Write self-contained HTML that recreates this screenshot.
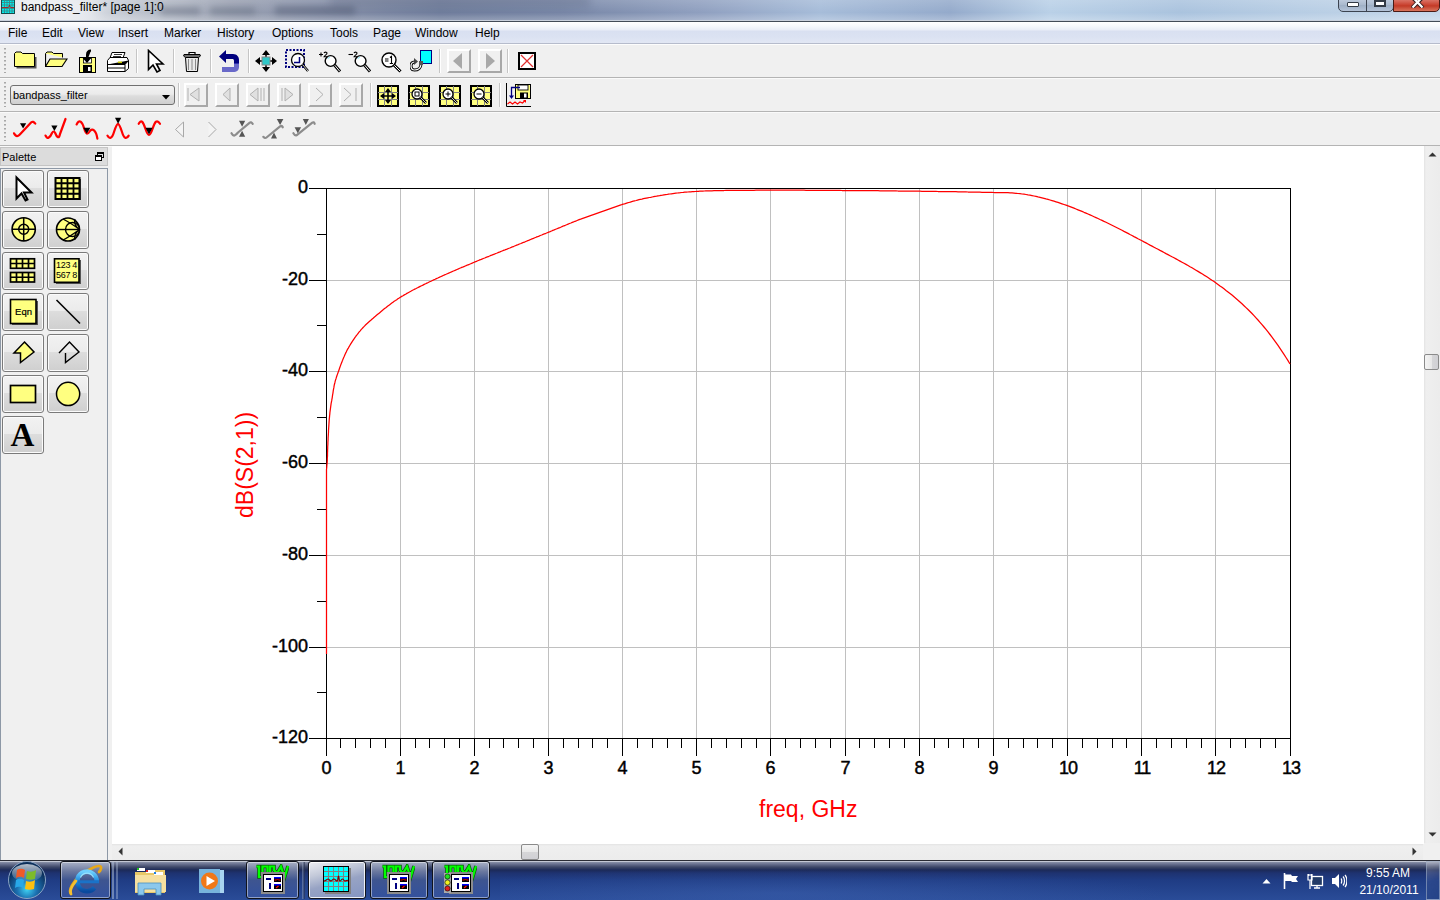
<!DOCTYPE html><html><head><meta charset="utf-8"><title>bandpass_filter</title><style>

*{margin:0;padding:0;box-sizing:border-box}
html,body{width:1440px;height:900px;overflow:hidden;background:#f0f0f0;font-family:"Liberation Sans",sans-serif}
.a{position:absolute}
.menu{position:absolute;top:26px;font-size:12px;color:#000;line-height:14px}
.sep{position:absolute;width:1px;background:#c8c8c8;border-right:1px solid #fff}
.grip{position:absolute;left:4px;width:2px;background:repeating-linear-gradient(to bottom,#a8a8a8 0,#a8a8a8 1px,#c8c8c8 1px,#c8c8c8 2px,transparent 2px,transparent 4px)}
.pb{position:absolute;width:42px;height:38px;border:1px solid #7a7a7a;border-radius:3px;box-shadow:inset 0 0 0 1px #fbfbfb;background:linear-gradient(to bottom,#f2f2f2 0%,#ebebeb 47%,#dddddd 48%,#cfcfcf 100%)}
.tbtn{position:absolute;top:861px;height:38px;border:1px solid rgba(255,255,255,0.35);border-radius:3px;background:linear-gradient(to bottom,rgba(255,255,255,0.28),rgba(255,255,255,0.08) 50%,rgba(255,255,255,0.05));box-shadow:inset 0 0 0 1px rgba(0,0,0,0.25)}

</style></head><body>
<div class="a" style="left:0;top:0;width:1440px;height:21px;background:linear-gradient(to right,#dfe3ea 0px,#d3d8e0 90px,#b9bfca 150px,#9aa1b2 230px,#8690a8 320px,#6f7d9c 440px,#7786a6 560px,#8f9fbf 700px,#a6bcd9 820px,#94aacb 950px,#b9d0e7 1050px,#aac3de 1180px,#b7cde4 1300px,#c4d7ea 1440px)"></div>
<div class="a" style="left:0;top:0;width:1440px;height:21px;background:linear-gradient(to bottom,rgba(255,255,255,0.15),rgba(255,255,255,0) 60%,rgba(255,255,255,0.25))"></div>
<div class="a" style="left:0;top:0;width:1440px;height:21px;overflow:hidden"><div class="a" style="left:10px;top:-6px;width:90px;height:30px;border-radius:50%;background:rgba(255,255,255,0.55);filter:blur(8px)"></div><div class="a" style="left:160px;top:7px;width:40px;height:8px;background:rgba(70,78,100,0.35);filter:blur(3px)"></div><div class="a" style="left:210px;top:7px;width:45px;height:8px;background:rgba(70,78,100,0.3);filter:blur(3px)"></div><div class="a" style="left:275px;top:6px;width:80px;height:9px;background:rgba(60,68,95,0.35);filter:blur(3px)"></div><div class="a" style="left:330px;top:-4px;width:260px;height:10px;background:rgba(50,60,90,0.22);filter:blur(5px)"></div></div>
<div class="a" style="left:0;top:20px;width:1440px;height:1px;background:#c9d0dc"></div>
<div class="a" style="left:0;top:21px;width:1440px;height:1px;background:#434b57"></div>
<svg class="a" style="left:1px;top:0" width="14" height="14" viewBox="0 0 14 14"><rect x="0.5" y="0" width="13" height="13.5" fill="#00f0f0" stroke="#1a4a4a" stroke-width="1"/><path d="M3.5 0V13M6 0V13M8.5 0V13M11 0V13M1 2.5H13M1 5H13M1 8.5H13M1 11H13" stroke="#3a8a8a" stroke-width="0.9"/><path d="M1 7.5H7.5L8.5 5L9.5 7.5H13" stroke="#a02828" stroke-width="1" fill="none"/></svg>
<div class="a" style="left:21px;top:0px;font-size:12px;line-height:14px;color:#000;white-space:nowrap">bandpass_filter* [page 1]:0</div>
<div class="a" style="left:1338px;top:-3px;width:56px;height:15px;border:1px solid #3b4350;border-radius:0 0 5px 5px;background:linear-gradient(to bottom,#c4d0e0,#a9b8cd 55%,#9fb0c6 56%,#b4c3d8)"></div>
<div class="a" style="left:1366px;top:0;width:1px;height:11px;background:#3b4350"></div>
<div class="a" style="left:1393px;top:-3px;width:47px;height:15px;border:1px solid #4a1a14;border-radius:0 0 5px 0;background:linear-gradient(to bottom,#e0867a,#c9402e 55%,#c23a26 60%,#d9745c)"></div>
<div class="a" style="left:1347px;top:2px;width:12px;height:5px;background:#fff;border:1px solid #333a45;border-radius:1px"></div>
<div class="a" style="left:1374px;top:-2px;width:12px;height:9px;border:2px solid #333a45;background:#fff"></div>
<div class="a" style="left:1376px;top:-2px;width:8px;height:4px;background:#333a45"></div>
<svg class="a" style="left:1411px;top:0" width="14" height="8" viewBox="0 0 14 8"><path d="M1 -3L12 8M12 -3L1 8" stroke="#3a2020" stroke-width="4"/><path d="M1.5 -3L11.5 7.5M11.5 -3L1.5 7.5" stroke="#fff" stroke-width="2.2"/></svg>
<div class="a" style="left:0;top:22px;width:1440px;height:21px;background:linear-gradient(to bottom,#ffffff 0px,#f6f8fc 4px,#e9edf7 8px,#d9e0f1 9px,#dbe2f2 15px,#e2e7f4 21px)"></div>
<div class="a" style="left:0;top:43px;width:1440px;height:1px;background:#b6bccc"></div>
<div class="a" style="left:0;top:44px;width:1440px;height:1px;background:#fdfdfd"></div>
<div class="menu" style="left:8px">File</div>
<div class="menu" style="left:42px">Edit</div>
<div class="menu" style="left:78px">View</div>
<div class="menu" style="left:118px">Insert</div>
<div class="menu" style="left:164px">Marker</div>
<div class="menu" style="left:217px">History</div>
<div class="menu" style="left:272px">Options</div>
<div class="menu" style="left:330px">Tools</div>
<div class="menu" style="left:373px">Page</div>
<div class="menu" style="left:415px">Window</div>
<div class="menu" style="left:475px">Help</div>
<div class="a" style="left:0;top:77px;width:1440px;height:1px;background:#b4b4b4"></div>
<div class="a" style="left:0;top:78px;width:1440px;height:1px;background:#fafafa"></div>
<div class="a" style="left:0;top:111px;width:1440px;height:1px;background:#b4b4b4"></div>
<div class="a" style="left:0;top:112px;width:1440px;height:1px;background:#fafafa"></div>
<div class="a" style="left:0;top:145px;width:1440px;height:1px;background:#b4b4b4"></div>
<div class="a" style="left:0;top:146px;width:1440px;height:1px;background:#fafafa"></div>
<div class="grip" style="top:48px;height:25px"></div>
<div class="grip" style="top:82px;height:25px"></div>
<div class="grip" style="top:116px;height:25px"></div>
<svg class="a" style="left:14px;top:51px" width="23" height="18" viewBox="0 0 23 18"><path d="M1.5 3.5H8.5L10 5H21.5V16.5H1.5Z" fill="#555" transform="translate(1,1)"/><path d="M0.5 2.5L2 1H7L8.5 2.5H20.5V15.5H0.5Z" fill="#ffff80" stroke="#000"/></svg>
<svg class="a" style="left:45px;top:51px" width="23" height="18" viewBox="0 0 23 18"><path d="M0.5 2.5L2 1H7L8.5 2.5H17.5V6.5" fill="#ffff80" stroke="#000"/><path d="M0.5 2.5V15.5H17L22 8H5L0.5 15.5" fill="#ffff80" stroke="#000" stroke-width="1.2"/></svg>
<svg class="a" style="left:79px;top:49px" width="17" height="24" viewBox="0 0 17 24"><rect x="0.5" y="8.5" width="16" height="15" fill="#ffff80" stroke="#000"/><rect x="4" y="16" width="9" height="7" fill="#000"/><rect x="9" y="18" width="2.5" height="4" fill="#fff"/><rect x="4.5" y="9" width="8" height="5" fill="#fff" stroke="#000" stroke-width="0.8"/><path d="M12 1.5C9 1.5 8 3 8 6V12M5 9L8 12.5L11 9Z" stroke="#000" stroke-width="2" fill="#000"/></svg>
<svg class="a" style="left:106px;top:51px" width="24" height="21" viewBox="0 0 24 21"><path d="M6 1.5H19L17 7H4Z" fill="#fff" stroke="#000"/><path d="M8 3.5H16M7 5.5H15" stroke="#000" stroke-width="0.8"/><path d="M1.5 9.5L4 6.5H21L22.5 9.5V17.5L19 20.5H1.5Z" fill="#fff" stroke="#000"/><path d="M1.5 13.5H19L22.5 9.5M19 13.5V20.5M1.5 17H19" stroke="#000"/><rect x="12" y="10.5" width="4" height="1.6" fill="#c8c800"/></svg>
<div class="a" style="left:136px;top:49px;width:1px;height:24px;background:#c5c5c5"></div><div class="a" style="left:137px;top:49px;width:1px;height:24px;background:#fff"></div>
<svg class="a" style="left:147px;top:49px" width="18" height="24" viewBox="0 0 18 24"><path d="M1.5 1.5V20.5L6 16L10 23L13 21.5L9.5 15H16Z" fill="#fff" stroke="#000" stroke-width="1.6"/></svg>
<div class="a" style="left:173px;top:49px;width:1px;height:24px;background:#c5c5c5"></div><div class="a" style="left:174px;top:49px;width:1px;height:24px;background:#fff"></div>
<svg class="a" style="left:182px;top:50px" width="20" height="23" viewBox="0 0 20 23"><path d="M2 4.5H18M7 4.5V2.5H13V4.5" stroke="#000" fill="none" stroke-width="1.2"/><path d="M1.5 5H18.5L17.5 7H2.5Z" fill="#ddd" stroke="#000"/><path d="M3.5 7.5H16.5L15.5 21.5H4.5Z" fill="#e8e8e8" stroke="#000"/><path d="M6.5 9V20M10 9V20M13.5 9V20" stroke="#888"/></svg>
<div class="a" style="left:210px;top:49px;width:1px;height:24px;background:#c5c5c5"></div><div class="a" style="left:211px;top:49px;width:1px;height:24px;background:#fff"></div>
<svg class="a" style="left:219px;top:50px" width="22" height="23" viewBox="0 0 22 23"><path d="M0 6.5L7 0V4H14C18 4 20 7 20 10V14H15V11C15 9.5 14.5 9 13 9H7V13Z" fill="#00007e"/><path d="M20 13V17C20 20 18 22 14 22H3V17H15V13Z" fill="#3c3cbc" opacity="0.75"/></svg>
<div class="a" style="left:248px;top:49px;width:1px;height:24px;background:#c5c5c5"></div><div class="a" style="left:249px;top:49px;width:1px;height:24px;background:#fff"></div>
<svg class="a" style="left:255px;top:50px" width="22" height="22" viewBox="0 0 22 22"><path d="M11 0L15 5H7ZM11 22L15 17H7ZM0 11L5 7V15ZM22 11L17 7V15Z" fill="#000"/><path d="M11 4V18M4 11H18" stroke="#000" stroke-width="1.5"/><rect x="7" y="7" width="8" height="8" fill="#30c8c8" stroke="#888"/></svg>
<svg class="a" style="left:285px;top:49px" width="25" height="24" viewBox="0 0 25 24"><rect x="1" y="1" width="18" height="17" fill="none" stroke="#00007e" stroke-width="2" stroke-dasharray="2 1.5"/><circle cx="13" cy="11" r="6.5" fill="#fff" stroke="#000" stroke-width="1.3"/><path d="M9 13.5H14.5V8" stroke="#00007e" stroke-width="1.5" fill="none"/><path d="M17.5 15.5L23 22" stroke="#000" stroke-width="2.4"/><path d="M17.5 15.5L23 22" stroke="#fff" stroke-width="0.8"/></svg>
<svg class="a" style="left:318px;top:51px" width="24" height="22" viewBox="0 0 24 22"><circle cx="12.6" cy="10" r="5.4" fill="#fff" stroke="#000" stroke-width="1.4"/><path d="M10 7.5A3 3 0 0 1 11.5 6.3" stroke="#30d0f0" stroke-width="1" fill="none"/><path d="M16.5 14L22 20.5" stroke="#000" stroke-width="3"/><path d="M16.8 14.3L21.7 20.2" stroke="#fff" stroke-width="1"/><path d="M1 3.5H5M3 1.5V5.5" stroke="#000" stroke-width="1.1"/><path d="M6 2.2C6.3 0.8 9 0.6 9 2.3C9 3.5 6.3 4.5 6 5.8H9.4" stroke="#000" stroke-width="1.1" fill="none"/></svg>
<svg class="a" style="left:348px;top:51px" width="24" height="22" viewBox="0 0 24 22"><circle cx="12.6" cy="10" r="5.4" fill="#fff" stroke="#000" stroke-width="1.4"/><path d="M10 7.5A3 3 0 0 1 11.5 6.3" stroke="#30d0f0" stroke-width="1" fill="none"/><path d="M16.5 14L22 20.5" stroke="#000" stroke-width="3"/><path d="M16.8 14.3L21.7 20.2" stroke="#fff" stroke-width="1"/><path d="M0.5 3.5H5" stroke="#000" stroke-width="1.1"/><path d="M6 2.2C6.3 0.8 9 0.6 9 2.3C9 3.5 6.3 4.5 6 5.8H9.4" stroke="#000" stroke-width="1.1" fill="none"/></svg>
<svg class="a" style="left:381px;top:51px" width="22" height="22" viewBox="0 0 22 22"><circle cx="8" cy="9" r="7" fill="#fff" stroke="#000" stroke-width="1.4"/><path d="M4 8H7.5M4 10H7.5M9 6.5L10.5 5.3V12.5M8.8 12.5H12" stroke="#000" stroke-width="1.1" fill="none"/><path d="M13 14L19.5 20.5" stroke="#000" stroke-width="3"/><path d="M13.3 14.3L19.2 20.2" stroke="#fff" stroke-width="1"/></svg>
<svg class="a" style="left:410px;top:50px" width="23" height="22" viewBox="0 0 23 22"><rect x="10.5" y="0.5" width="11" height="13" fill="#00ffff" stroke="#000080"/><path d="M11 14C11 18 8 20 4.5 20C2 20 1 18 1 16C1 13 3 12 5 12" fill="none" stroke="#000" stroke-width="3"/><path d="M11 14C11 18 8 20 4.5 20C2 20 1 18 1 16C1 13 3 12 5 12" fill="none" stroke="#fff" stroke-width="1.2"/><path d="M4 8L8 11.5L4 15Z" fill="#444"/><rect x="9" y="11" width="4" height="4" fill="#555"/></svg>
<div class="a" style="left:439px;top:49px;width:1px;height:24px;background:#c5c5c5"></div><div class="a" style="left:440px;top:49px;width:1px;height:24px;background:#fff"></div>
<div class="a" style="left:447px;top:49px;width:24px;height:24px;background:#f0f0f0;border-top:2px solid #fff;border-left:2px solid #fff;border-right:2px solid #a8a8a8;border-bottom:2px solid #a8a8a8"></div>
<svg class="a" style="left:452px;top:52px" width="11" height="18" viewBox="0 0 11 18"><path d="M10 1V17L1 9Z" fill="#a8a8a8"/></svg>
<div class="a" style="left:478px;top:49px;width:24px;height:24px;background:#f0f0f0;border-top:2px solid #fff;border-left:2px solid #fff;border-right:2px solid #a8a8a8;border-bottom:2px solid #a8a8a8"></div>
<svg class="a" style="left:485px;top:52px" width="11" height="18" viewBox="0 0 11 18"><path d="M1 1V17L10 9Z" fill="#a8a8a8"/></svg>
<div class="a" style="left:507px;top:49px;width:1px;height:24px;background:#c5c5c5"></div><div class="a" style="left:508px;top:49px;width:1px;height:24px;background:#fff"></div>
<svg class="a" style="left:518px;top:52px" width="18" height="18" viewBox="0 0 18 18"><rect x="1" y="1" width="16" height="16" fill="#fff" stroke="#000" stroke-width="2"/><path d="M3 3L15 15M15 3L3 15" stroke="#e03030" stroke-width="1.2"/></svg>
<div class="a" style="left:10px;top:85px;width:165px;height:20px;border:1px solid #707070;border-radius:3px;background:linear-gradient(to bottom,#f2f2f2,#ebebeb 45%,#dddddd 55%,#cfcfcf)"></div>
<div class="a" style="left:13px;top:88px;font-size:11px;line-height:14px;color:#000;white-space:nowrap">bandpass_filter</div>
<svg class="a" style="left:162px;top:95px" width="8" height="5" viewBox="0 0 8 5"><path d="M0 0H8L4 4.5Z" fill="#000"/></svg>
<div class="a" style="left:178px;top:83px;width:1px;height:24px;background:#c5c5c5"></div><div class="a" style="left:179px;top:83px;width:1px;height:24px;background:#fff"></div>
<div class="a" style="left:184px;top:83px;width:24px;height:24px;background:#f0f0f0;border-top:2px solid #fff;border-left:2px solid #fff;border-right:2px solid #a8a8a8;border-bottom:2px solid #a8a8a8"></div>
<svg class="a" style="left:184px;top:83px" width="24" height="24" viewBox="0 0 24 24"><path d="M4 5V18M15 5V18L6 11.5Z" stroke="#b0b0b0" fill="#e0e0e0" stroke-width="1"/></svg>
<div class="a" style="left:215px;top:83px;width:24px;height:24px;background:#f0f0f0;border-top:2px solid #fff;border-left:2px solid #fff;border-right:2px solid #a8a8a8;border-bottom:2px solid #a8a8a8"></div>
<svg class="a" style="left:215px;top:83px" width="24" height="24" viewBox="0 0 24 24"><path d="M15 5V18L8 11.5Z" stroke="#b0b0b0" fill="#e0e0e0"/></svg>
<div class="a" style="left:246px;top:83px;width:24px;height:24px;background:#f0f0f0;border-top:2px solid #fff;border-left:2px solid #fff;border-right:2px solid #a8a8a8;border-bottom:2px solid #a8a8a8"></div>
<svg class="a" style="left:246px;top:83px" width="24" height="24" viewBox="0 0 24 24"><path d="M12 5V18L4 11.5ZM15 5V18M18 5V18" stroke="#b0b0b0" fill="#e0e0e0"/></svg>
<div class="a" style="left:277px;top:83px;width:24px;height:24px;background:#f0f0f0;border-top:2px solid #fff;border-left:2px solid #fff;border-right:2px solid #a8a8a8;border-bottom:2px solid #a8a8a8"></div>
<svg class="a" style="left:277px;top:83px" width="24" height="24" viewBox="0 0 24 24"><path d="M8 5V18L16 11.5Z M5 5V18" stroke="#b0b0b0" fill="#e0e0e0"/></svg>
<div class="a" style="left:308px;top:83px;width:24px;height:24px;background:#f0f0f0;border-top:2px solid #fff;border-left:2px solid #fff;border-right:2px solid #a8a8a8;border-bottom:2px solid #a8a8a8"></div>
<svg class="a" style="left:308px;top:83px" width="24" height="24" viewBox="0 0 24 24"><path d="M8 5L15 11.5L8 18" stroke="#b0b0b0" fill="none"/></svg>
<div class="a" style="left:339px;top:83px;width:24px;height:24px;background:#f0f0f0;border-top:2px solid #fff;border-left:2px solid #fff;border-right:2px solid #a8a8a8;border-bottom:2px solid #a8a8a8"></div>
<svg class="a" style="left:339px;top:83px" width="24" height="24" viewBox="0 0 24 24"><path d="M5 5L12 11.5L5 18M17 5V18" stroke="#b0b0b0" fill="none"/></svg>
<div class="a" style="left:370px;top:83px;width:1px;height:24px;background:#c5c5c5"></div><div class="a" style="left:371px;top:83px;width:1px;height:24px;background:#fff"></div>
<svg class="a" style="left:377px;top:85px" width="22" height="22" viewBox="0 0 22 22"><rect x="1" y="1" width="20" height="20" fill="#ffff80" stroke="#000" stroke-width="2"/><path d="M7.5 1V21M14.5 1V21M1 7.5H21M1 14.5H21" stroke="#808080" stroke-width="1"/><path d="M11 3L14 7H8ZM11 19L14 15H8ZM3 11L7 8V14ZM19 11L15 8V14Z" fill="#000"/><path d="M11 6V16M6 11H16" stroke="#000" stroke-width="1.6"/></svg>
<svg class="a" style="left:408px;top:85px" width="22" height="22" viewBox="0 0 22 22"><rect x="1" y="1" width="20" height="20" fill="#ffff80" stroke="#000" stroke-width="2"/><path d="M7.5 1V21M14.5 1V21M1 7.5H21M1 14.5H21" stroke="#808080" stroke-width="1"/><circle cx="9" cy="9" r="5" fill="#fff" stroke="#000" stroke-width="1.3"/><rect x="7" y="7" width="4" height="4" fill="none" stroke="#000"/><path d="M12.5 12.5L18 18" stroke="#000" stroke-width="2.5"/><path d="M12.5 12.5L18 18" stroke="#fff" stroke-width="0.8"/></svg>
<svg class="a" style="left:439px;top:85px" width="22" height="22" viewBox="0 0 22 22"><rect x="1" y="1" width="20" height="20" fill="#ffff80" stroke="#000" stroke-width="2"/><path d="M7.5 1V21M14.5 1V21M1 7.5H21M1 14.5H21" stroke="#808080" stroke-width="1"/><circle cx="9" cy="9" r="5" fill="#fff" stroke="#000" stroke-width="1.3"/><path d="M6.5 9H11.5M9 6.5V11.5" stroke="#000"/><path d="M12.5 12.5L18 18" stroke="#000" stroke-width="2.5"/><path d="M12.5 12.5L18 18" stroke="#fff" stroke-width="0.8"/></svg>
<svg class="a" style="left:470px;top:85px" width="22" height="22" viewBox="0 0 22 22"><rect x="1" y="1" width="20" height="20" fill="#ffff80" stroke="#000" stroke-width="2"/><path d="M7.5 1V21M14.5 1V21M1 7.5H21M1 14.5H21" stroke="#808080" stroke-width="1"/><circle cx="9" cy="9" r="5" fill="#fff" stroke="#000" stroke-width="1.3"/><path d="M6.5 9H11.5" stroke="#000"/><path d="M12.5 12.5L18 18" stroke="#000" stroke-width="2.5"/><path d="M12.5 12.5L18 18" stroke="#fff" stroke-width="0.8"/></svg>
<div class="a" style="left:499px;top:83px;width:1px;height:24px;background:#c5c5c5"></div><div class="a" style="left:500px;top:83px;width:1px;height:24px;background:#fff"></div>
<svg class="a" style="left:506px;top:83px" width="26" height="25" viewBox="0 0 26 25"><path d="M0.5 0V23.5H25" stroke="#000" fill="none"/><rect x="9.5" y="1.5" width="15" height="14" fill="#ffff80" stroke="#000"/><rect x="14" y="9.5" width="8" height="6" fill="#000"/><rect x="18" y="10.5" width="2.5" height="4" fill="#fff"/><rect x="12" y="2" width="10" height="5" fill="#fff" stroke="#000" stroke-width="0.9"/><path d="M14 4.5H5.5V13" stroke="#000080" fill="none" stroke-width="1.3"/><path d="M3 12.5L5.5 16L8 12.5Z" fill="#000080"/><path d="M1.5 21L4 19L6.5 21L9 19L11.5 21L14 19L16.5 20L19 17.5" stroke="#f00" fill="none" stroke-width="1.1"/><path d="M17 17H20V20Z" fill="#f00"/></svg>
<svg class="a" style="left:0;top:0" width="330" height="146" viewBox="0 0 330 146"><path d="M14 133.3Q15.5 136.5 17.7 136Q19 135.5 21 133.2L31.3 122.3Q33 120.8 35.3 123.6" stroke="#ff0000" stroke-width="2.2" fill="none" stroke-linecap="round" stroke-linejoin="round"/><path d="M20 123.2H26.2L23.1 128.6Z" fill="#000"/><path d="M45.5 135.6Q47 138.6 48.5 137.8Q50.5 136.8 52 133Q53.7 130 55.2 133Q56.5 136.5 58 137.2Q59.3 137.5 60 134L65.5 119" stroke="#ff0000" stroke-width="2.2" fill="none" stroke-linecap="round" stroke-linejoin="round"/><path d="M51.3 125.4H57.5L54.4 131Z" fill="#000"/><path d="M76.6 124.4Q78.5 120.5 80.6 121.6Q82.5 123 84 128Q85.5 133.3 87 133.6Q88.5 133.6 90 131Q92 128.6 94 130.3Q96.5 132.5 97.4 138.6" stroke="#ff0000" stroke-width="2.2" fill="none" stroke-linecap="round" stroke-linejoin="round"/><path d="M83.2 127.8H90.4L86.8 133.8Z" fill="#000"/><path d="M107.4 135.6Q109 138.6 110.6 137.8Q112.5 137 114 132Q116.5 124 118 123.8Q119.5 124 122 132Q123.5 137 125.2 137.8Q127 138.6 128.7 135.6" stroke="#ff0000" stroke-width="2.2" fill="none" stroke-linecap="round" stroke-linejoin="round"/><path d="M115 117.8H121.2L118.1 123.8Z" fill="#000"/><path d="M138.7 123.8Q140.5 120.5 142 121.6Q143.5 123 145.5 129Q147.5 135 149 135Q150.5 135 152.5 129Q154.5 123 156 121.6Q158 120.5 160 123.8" stroke="#ff0000" stroke-width="2.2" fill="none" stroke-linecap="round" stroke-linejoin="round"/><path d="M145.4 127.8H152.6L149 134.4Z" fill="#000"/><path d="M183.5 122V137L175.5 129.5Z" fill="#f4f4f4" stroke="#a8a8a8" stroke-width="1"/><path d="M208.5 122L216 129.5L208.5 137" fill="#f4f4f4" stroke="#a8a8a8" stroke-width="1"/><path d="M231.5 133.2Q233 136 234.5 135.5Q236 135 238 132.5L249.5 122.8Q251 121.5 252.7 123.8" stroke="#8c8c8c" stroke-width="2.2" fill="none" stroke-linecap="round" stroke-linejoin="round"/><path d="M239 120.8H245.2L242.1 126.8ZM239 136.8H245.2L242.1 130.8Z" fill="#555"/><path d="M263.3 136.8Q265 138.8 266.5 137.5L280.4 126.2Q282 125.5 282.8 127.3" stroke="#8c8c8c" stroke-width="2.2" fill="none" stroke-linecap="round" stroke-linejoin="round"/><path d="M276.8 119H283.4L280.1 125ZM271 138.6H277L274 132.6Z" fill="#555"/><path d="M293.4 133.2Q295 136 296.5 135.3L312.3 122.6Q313.8 121.5 314.7 123.8" stroke="#8c8c8c" stroke-width="2.2" fill="none" stroke-linecap="round" stroke-linejoin="round"/><path d="M302.8 119H308.9L305.8 125ZM294.6 127.3H301.1L297.8 133.3Z" fill="#555"/></svg>
<div class="a" style="left:0;top:147px;width:108px;height:19px;background:#dcdcdc;border:1px solid #c4c4c4"></div>
<div class="a" style="left:2px;top:150px;font-size:11px;line-height:14px;color:#000">Palette</div>
<svg class="a" style="left:95px;top:152px" width="9" height="9" viewBox="0 0 9 9"><rect x="2.5" y="0.5" width="6" height="5" fill="none" stroke="#000"/><rect x="2.5" y="0.5" width="6" height="1.5" fill="#000"/><rect x="0.5" y="3.5" width="6" height="5" fill="#fff" stroke="#000"/><rect x="0.5" y="3.5" width="6" height="1.5" fill="#000"/></svg>
<div class="a" style="left:0;top:168px;width:108px;height:692px;border:1px solid #8d98a6;border-bottom:none;background:#f0f0f0"></div>
<div class="pb" style="left:2px;top:170px"></div>
<svg class="a" style="left:2px;top:170px" width="42" height="38" viewBox="0 0 42 38"><path d="M14.5 7.5L14.5 28.5L19.5 23.5L23.5 30.5L25.5 29.5L22 22.5L29.5 22.5Z" fill="#fff" stroke="#000" stroke-width="2" stroke-linejoin="miter"/></svg>
<div class="pb" style="left:47px;top:170px"></div>
<svg class="a" style="left:47px;top:170px" width="42" height="38" viewBox="0 0 42 38"><rect x="10" y="9" width="24" height="21" fill="#444"/><rect x="8.5" y="8" width="24" height="21" fill="#ffff80" stroke="#000" stroke-width="2"/><path d="M14.5 8V29M20.5 8V29M26.5 8V29M8.5 13.25H32.5M8.5 18.5H32.5M8.5 23.75H32.5" stroke="#000" stroke-width="1.8"/></svg>
<div class="pb" style="left:2px;top:211px"></div>
<svg class="a" style="left:2px;top:211px" width="42" height="38" viewBox="0 0 42 38"><circle cx="21.7" cy="18.3" r="11.6" fill="#ffff80" stroke="#000" stroke-width="1.6"/><circle cx="21.7" cy="18.3" r="5" fill="none" stroke="#000" stroke-width="1.5"/><path d="M10 18.3H33.5M21.7 6.7V30" stroke="#000" stroke-width="1.5"/></svg>
<div class="pb" style="left:47px;top:211px"></div>
<svg class="a" style="left:47px;top:211px" width="42" height="38" viewBox="0 0 42 38"><circle cx="21" cy="18.5" r="11.5" fill="#ffff80" stroke="#000" stroke-width="1.6"/><path d="M9.5 18.5H32.5" stroke="#000" stroke-width="1.4"/><circle cx="25.5" cy="18.5" r="7" fill="none" stroke="#000" stroke-width="1.4"/><path d="M32.5 18.5C28 15 27 11 28 8M32.5 18.5C28 22 27 26 28 29M32.5 18.5C25 13 20 10 16 8M32.5 18.5C25 24 20 27 16 29" fill="none" stroke="#000" stroke-width="1.3"/></svg>
<div class="pb" style="left:2px;top:252px"></div>
<svg class="a" style="left:2px;top:252px" width="42" height="38" viewBox="0 0 42 38"><g stroke="#000" stroke-width="1.7"><rect x="8.5" y="6.8" width="24" height="9.5" fill="#ffff80"/><path d="M14.5 6.8V16.3M20.5 6.8V16.3M26.5 6.8V16.3M8.5 11.5H32.5"/><rect x="8.5" y="20.5" width="24" height="9.5" fill="#ffff80"/><path d="M14.5 20.5V30M20.5 20.5V30M26.5 20.5V30M8.5 25.25H32.5"/></g></svg>
<div class="pb" style="left:47px;top:252px"></div>
<svg class="a" style="left:47px;top:252px" width="42" height="38" viewBox="0 0 42 38"><rect x="9" y="8" width="25" height="24" fill="#555"/><rect x="7.5" y="6.8" width="24.5" height="23.5" fill="#ffff80" stroke="#000" stroke-width="1.6"/><text x="9" y="16" font-family="Liberation Sans" font-size="9" letter-spacing="-0.3" fill="#000">123 4</text><text x="9" y="26" font-family="Liberation Sans" font-size="9" letter-spacing="-0.3" fill="#000">567 8</text></svg>
<div class="pb" style="left:2px;top:293px"></div>
<svg class="a" style="left:2px;top:293px" width="42" height="38" viewBox="0 0 42 38"><rect x="10" y="8" width="26" height="24" fill="#555"/><rect x="8.5" y="6.5" width="25.5" height="24" fill="#ffff80" stroke="#000" stroke-width="1.6"/><text x="21.5" y="21.5" text-anchor="middle" font-family="Liberation Sans" font-size="9.5" fill="#000" stroke="#000" stroke-width="0.2">Eqn</text></svg>
<div class="pb" style="left:47px;top:293px"></div>
<svg class="a" style="left:47px;top:293px" width="42" height="38" viewBox="0 0 42 38"><path d="M9.5 7L33 30.5" stroke="#000" stroke-width="1.6"/></svg>
<div class="pb" style="left:2px;top:334px"></div>
<svg class="a" style="left:2px;top:334px" width="42" height="38" viewBox="0 0 42 38"><path d="M22.5 8L32 18L18.5 28.5V19H12Z" fill="#ffff80" stroke="#000" stroke-width="1.5" stroke-linejoin="miter"/></svg>
<div class="pb" style="left:47px;top:334px"></div>
<svg class="a" style="left:47px;top:334px" width="42" height="38" viewBox="0 0 42 38"><path d="M18.5 19V28.5L32 18L22.5 8L12 19" fill="none" stroke="#000" stroke-width="1.4"/></svg>
<div class="pb" style="left:2px;top:375px"></div>
<svg class="a" style="left:2px;top:375px" width="42" height="38" viewBox="0 0 42 38"><rect x="8.5" y="10.5" width="25" height="17" fill="#ffff80" stroke="#000" stroke-width="1.7"/></svg>
<div class="pb" style="left:47px;top:375px"></div>
<svg class="a" style="left:47px;top:375px" width="42" height="38" viewBox="0 0 42 38"><circle cx="21.1" cy="18.9" r="11.6" fill="#ffff80" stroke="#000" stroke-width="1.5"/></svg>
<div class="pb" style="left:2px;top:416px"></div>
<svg class="a" style="left:2px;top:416px" width="42" height="38" viewBox="0 0 42 38"><text x="20.5" y="29.5" text-anchor="middle" font-family="Liberation Serif" font-weight="bold" font-size="33" fill="#000">A</text></svg>
<div class="a" style="left:112px;top:146px;width:1312px;height:698px;background:#fff"></div>
<div class="a" style="left:1424px;top:146px;width:16px;height:697px;background:linear-gradient(to right,#e3e3e3,#efefef 2px,#ececec)"></div>
<svg class="a" style="left:1428px;top:151px" width="9" height="6" viewBox="0 0 9 6"><path d="M0.5 5.5L4.5 1.5L8.5 5.5Z" fill="#333"/></svg>
<svg class="a" style="left:1428px;top:832px" width="9" height="6" viewBox="0 0 9 6"><path d="M0.5 0.5L4.5 4.5L8.5 0.5Z" fill="#333"/></svg>
<div class="a" style="left:1424px;top:354px;width:15px;height:16px;border:1px solid #8a8a8a;border-radius:2px;background:linear-gradient(to right,#f4f4f4,#e8e8e8 50%,#d6d6d8 51%,#d0d0d4)"></div>
<div class="a" style="left:112px;top:844px;width:1311px;height:16px;background:linear-gradient(to bottom,#e3e3e3,#efefef 2px,#ececec)"></div>
<svg class="a" style="left:117px;top:847px" width="6" height="9" viewBox="0 0 6 9"><path d="M5.5 0.5L1.5 4.5L5.5 8.5Z" fill="#333"/></svg>
<svg class="a" style="left:1412px;top:847px" width="6" height="9" viewBox="0 0 6 9"><path d="M0.5 0.5L4.5 4.5L0.5 8.5Z" fill="#333"/></svg>
<div class="a" style="left:521px;top:844px;width:18px;height:16px;border:1px solid #8a8a8a;border-radius:2px;background:linear-gradient(to bottom,#f4f4f4,#e8e8e8 50%,#d6d6d8 51%,#d0d0d4)"></div>
<svg class="a" style="left:0;top:0" width="1440" height="900" viewBox="0 0 1440 900">
<g shape-rendering="crispEdges" stroke-width="1">
<line x1="400.5" y1="188" x2="400.5" y2="738" stroke="#c0c0c0"/>
<line x1="474.5" y1="188" x2="474.5" y2="738" stroke="#c0c0c0"/>
<line x1="548.5" y1="188" x2="548.5" y2="738" stroke="#c0c0c0"/>
<line x1="622.5" y1="188" x2="622.5" y2="738" stroke="#c0c0c0"/>
<line x1="696.5" y1="188" x2="696.5" y2="738" stroke="#c0c0c0"/>
<line x1="770.5" y1="188" x2="770.5" y2="738" stroke="#c0c0c0"/>
<line x1="845.5" y1="188" x2="845.5" y2="738" stroke="#c0c0c0"/>
<line x1="919.5" y1="188" x2="919.5" y2="738" stroke="#c0c0c0"/>
<line x1="993.5" y1="188" x2="993.5" y2="738" stroke="#c0c0c0"/>
<line x1="1067.5" y1="188" x2="1067.5" y2="738" stroke="#c0c0c0"/>
<line x1="1141.5" y1="188" x2="1141.5" y2="738" stroke="#c0c0c0"/>
<line x1="1215.5" y1="188" x2="1215.5" y2="738" stroke="#c0c0c0"/>
<line x1="326" y1="280.5" x2="1290" y2="280.5" stroke="#c0c0c0"/>
<line x1="326" y1="371.5" x2="1290" y2="371.5" stroke="#c0c0c0"/>
<line x1="326" y1="463.5" x2="1290" y2="463.5" stroke="#c0c0c0"/>
<line x1="326" y1="555.5" x2="1290" y2="555.5" stroke="#c0c0c0"/>
<line x1="326" y1="647.5" x2="1290" y2="647.5" stroke="#c0c0c0"/>
<line x1="309" y1="188.5" x2="1291" y2="188.5" stroke="#000"/>
<line x1="309" y1="738.5" x2="1291" y2="738.5" stroke="#000"/>
<line x1="326.5" y1="188" x2="326.5" y2="756" stroke="#000"/>
<line x1="1290.5" y1="188" x2="1290.5" y2="756" stroke="#000"/>
<line x1="309" y1="188.5" x2="326" y2="188.5" stroke="#000"/>
<line x1="309" y1="280.5" x2="326" y2="280.5" stroke="#000"/>
<line x1="309" y1="371.5" x2="326" y2="371.5" stroke="#000"/>
<line x1="309" y1="463.5" x2="326" y2="463.5" stroke="#000"/>
<line x1="309" y1="555.5" x2="326" y2="555.5" stroke="#000"/>
<line x1="309" y1="647.5" x2="326" y2="647.5" stroke="#000"/>
<line x1="309" y1="738.5" x2="326" y2="738.5" stroke="#000"/>
<line x1="317" y1="234.5" x2="326" y2="234.5" stroke="#000"/>
<line x1="317" y1="325.5" x2="326" y2="325.5" stroke="#000"/>
<line x1="317" y1="417.5" x2="326" y2="417.5" stroke="#000"/>
<line x1="317" y1="509.5" x2="326" y2="509.5" stroke="#000"/>
<line x1="317" y1="601.5" x2="326" y2="601.5" stroke="#000"/>
<line x1="317" y1="692.5" x2="326" y2="692.5" stroke="#000"/>
<line x1="326.5" y1="738" x2="326.5" y2="756" stroke="#000"/>
<line x1="400.5" y1="738" x2="400.5" y2="756" stroke="#000"/>
<line x1="474.5" y1="738" x2="474.5" y2="756" stroke="#000"/>
<line x1="548.5" y1="738" x2="548.5" y2="756" stroke="#000"/>
<line x1="622.5" y1="738" x2="622.5" y2="756" stroke="#000"/>
<line x1="696.5" y1="738" x2="696.5" y2="756" stroke="#000"/>
<line x1="770.5" y1="738" x2="770.5" y2="756" stroke="#000"/>
<line x1="845.5" y1="738" x2="845.5" y2="756" stroke="#000"/>
<line x1="919.5" y1="738" x2="919.5" y2="756" stroke="#000"/>
<line x1="993.5" y1="738" x2="993.5" y2="756" stroke="#000"/>
<line x1="1067.5" y1="738" x2="1067.5" y2="756" stroke="#000"/>
<line x1="1141.5" y1="738" x2="1141.5" y2="756" stroke="#000"/>
<line x1="1215.5" y1="738" x2="1215.5" y2="756" stroke="#000"/>
<line x1="1290.5" y1="738" x2="1290.5" y2="756" stroke="#000"/>
<line x1="340.5" y1="738" x2="340.5" y2="748" stroke="#000"/>
<line x1="355.5" y1="738" x2="355.5" y2="748" stroke="#000"/>
<line x1="370.5" y1="738" x2="370.5" y2="748" stroke="#000"/>
<line x1="385.5" y1="738" x2="385.5" y2="748" stroke="#000"/>
<line x1="415.5" y1="738" x2="415.5" y2="748" stroke="#000"/>
<line x1="429.5" y1="738" x2="429.5" y2="748" stroke="#000"/>
<line x1="444.5" y1="738" x2="444.5" y2="748" stroke="#000"/>
<line x1="459.5" y1="738" x2="459.5" y2="748" stroke="#000"/>
<line x1="489.5" y1="738" x2="489.5" y2="748" stroke="#000"/>
<line x1="503.5" y1="738" x2="503.5" y2="748" stroke="#000"/>
<line x1="518.5" y1="738" x2="518.5" y2="748" stroke="#000"/>
<line x1="533.5" y1="738" x2="533.5" y2="748" stroke="#000"/>
<line x1="563.5" y1="738" x2="563.5" y2="748" stroke="#000"/>
<line x1="578.5" y1="738" x2="578.5" y2="748" stroke="#000"/>
<line x1="592.5" y1="738" x2="592.5" y2="748" stroke="#000"/>
<line x1="607.5" y1="738" x2="607.5" y2="748" stroke="#000"/>
<line x1="637.5" y1="738" x2="637.5" y2="748" stroke="#000"/>
<line x1="652.5" y1="738" x2="652.5" y2="748" stroke="#000"/>
<line x1="667.5" y1="738" x2="667.5" y2="748" stroke="#000"/>
<line x1="681.5" y1="738" x2="681.5" y2="748" stroke="#000"/>
<line x1="711.5" y1="738" x2="711.5" y2="748" stroke="#000"/>
<line x1="726.5" y1="738" x2="726.5" y2="748" stroke="#000"/>
<line x1="741.5" y1="738" x2="741.5" y2="748" stroke="#000"/>
<line x1="756.5" y1="738" x2="756.5" y2="748" stroke="#000"/>
<line x1="785.5" y1="738" x2="785.5" y2="748" stroke="#000"/>
<line x1="800.5" y1="738" x2="800.5" y2="748" stroke="#000"/>
<line x1="815.5" y1="738" x2="815.5" y2="748" stroke="#000"/>
<line x1="830.5" y1="738" x2="830.5" y2="748" stroke="#000"/>
<line x1="859.5" y1="738" x2="859.5" y2="748" stroke="#000"/>
<line x1="874.5" y1="738" x2="874.5" y2="748" stroke="#000"/>
<line x1="889.5" y1="738" x2="889.5" y2="748" stroke="#000"/>
<line x1="904.5" y1="738" x2="904.5" y2="748" stroke="#000"/>
<line x1="934.5" y1="738" x2="934.5" y2="748" stroke="#000"/>
<line x1="948.5" y1="738" x2="948.5" y2="748" stroke="#000"/>
<line x1="963.5" y1="738" x2="963.5" y2="748" stroke="#000"/>
<line x1="978.5" y1="738" x2="978.5" y2="748" stroke="#000"/>
<line x1="1008.5" y1="738" x2="1008.5" y2="748" stroke="#000"/>
<line x1="1023.5" y1="738" x2="1023.5" y2="748" stroke="#000"/>
<line x1="1037.5" y1="738" x2="1037.5" y2="748" stroke="#000"/>
<line x1="1052.5" y1="738" x2="1052.5" y2="748" stroke="#000"/>
<line x1="1082.5" y1="738" x2="1082.5" y2="748" stroke="#000"/>
<line x1="1097.5" y1="738" x2="1097.5" y2="748" stroke="#000"/>
<line x1="1112.5" y1="738" x2="1112.5" y2="748" stroke="#000"/>
<line x1="1126.5" y1="738" x2="1126.5" y2="748" stroke="#000"/>
<line x1="1156.5" y1="738" x2="1156.5" y2="748" stroke="#000"/>
<line x1="1171.5" y1="738" x2="1171.5" y2="748" stroke="#000"/>
<line x1="1186.5" y1="738" x2="1186.5" y2="748" stroke="#000"/>
<line x1="1201.5" y1="738" x2="1201.5" y2="748" stroke="#000"/>
<line x1="1230.5" y1="738" x2="1230.5" y2="748" stroke="#000"/>
<line x1="1245.5" y1="738" x2="1245.5" y2="748" stroke="#000"/>
<line x1="1260.5" y1="738" x2="1260.5" y2="748" stroke="#000"/>
<line x1="1275.5" y1="738" x2="1275.5" y2="748" stroke="#000"/>
</g>
<g font-family="Liberation Sans" font-size="18" fill="#000" stroke="#000" stroke-width="0.45">
<text x="308" y="193" text-anchor="end">0</text>
<text x="308" y="285" text-anchor="end">-20</text>
<text x="308" y="376" text-anchor="end">-40</text>
<text x="308" y="468" text-anchor="end">-60</text>
<text x="308" y="560" text-anchor="end">-80</text>
<text x="308" y="652" text-anchor="end">-100</text>
<text x="308" y="743" text-anchor="end">-120</text>
<text x="326.5" y="774" text-anchor="middle">0</text>
<text x="400.5" y="774" text-anchor="middle">1</text>
<text x="474.5" y="774" text-anchor="middle">2</text>
<text x="548.5" y="774" text-anchor="middle">3</text>
<text x="622.5" y="774" text-anchor="middle">4</text>
<text x="696.5" y="774" text-anchor="middle">5</text>
<text x="770.5" y="774" text-anchor="middle">6</text>
<text x="845.5" y="774" text-anchor="middle">7</text>
<text x="919.5" y="774" text-anchor="middle">8</text>
<text x="993.5" y="774" text-anchor="middle">9</text>
<text x="1068.0" y="774" text-anchor="middle" letter-spacing="-1">10</text>
<text x="1142.0" y="774" text-anchor="middle" letter-spacing="-1">11</text>
<text x="1216.0" y="774" text-anchor="middle" letter-spacing="-1">12</text>
<text x="1291.0" y="774" text-anchor="middle" letter-spacing="-1">13</text>
</g>
<text x="759" y="817" font-family="Liberation Sans" font-size="23" fill="#f00">freq, GHz</text>
<text transform="translate(253,518) rotate(-90)" x="0" y="0" font-family="Liberation Sans" font-size="23" fill="#f00">dB(S(2,1))</text>
<path d="M326.5,654.0 L326.5,470.0 L326.5,469.5 L326.7,468.0 L326.8,466.5 L326.9,465.0 L327.1,463.5 L327.2,462.0 L327.3,460.5 L327.3,459.0 L327.4,457.5 L327.5,456.0 L327.5,454.5 L327.5,453.0 L327.6,451.5 L327.6,450.0 L327.7,448.5 L327.7,447.0 L327.8,445.5 L327.9,444.0 L327.9,442.5 L328.0,441.0 L328.1,439.5 L328.1,438.1 L328.2,436.6 L328.3,435.1 L328.4,433.6 L328.5,432.1 L328.5,430.6 L328.6,429.1 L328.7,427.6 L328.8,426.1 L328.9,424.6 L329.0,423.1 L329.1,421.6 L329.2,420.1 L329.3,418.6 L329.5,417.1 L329.6,415.6 L329.8,414.1 L329.9,412.6 L330.1,411.1 L330.3,409.6 L330.5,408.1 L330.7,406.7 L330.9,405.2 L331.1,403.7 L331.4,402.2 L331.7,400.7 L331.9,399.3 L332.2,397.8 L332.4,396.3 L332.6,394.8 L332.9,393.3 L333.1,391.8 L333.3,390.4 L333.6,388.9 L333.9,387.4 L334.1,385.9 L334.4,384.5 L334.8,383.0 L335.1,381.6 L335.5,380.1 L336.0,378.7 L336.4,377.3 L336.9,375.8 L337.4,374.4 L337.9,373.0 L338.4,371.6 L338.9,370.2 L339.4,368.7 L339.9,367.3 L340.4,365.9 L340.9,364.5 L341.5,363.1 L342.0,361.7 L342.6,360.3 L343.1,358.9 L343.7,357.5 L344.3,356.2 L344.9,354.8 L345.5,353.4 L346.2,352.1 L346.8,350.7 L347.5,349.4 L348.3,348.1 L349.0,346.8 L349.8,345.5 L350.6,344.2 L351.4,342.9 L352.2,341.6 L353.0,340.4 L353.9,339.1 L354.7,337.9 L355.6,336.7 L356.5,335.4 L357.4,334.3 L358.3,333.1 L359.2,331.9 L360.2,330.8 L361.1,329.7 L362.1,328.6 L363.1,327.5 L364.2,326.4 L365.2,325.3 L366.3,324.3 L367.4,323.3 L368.5,322.2 L369.6,321.2 L370.8,320.2 L371.9,319.2 L373.1,318.2 L374.2,317.2 L375.4,316.3 L376.5,315.3 L377.7,314.3 L378.8,313.4 L380.0,312.4 L381.1,311.5 L382.3,310.5 L383.4,309.6 L384.6,308.6 L385.8,307.7 L387.0,306.7 L388.2,305.8 L389.4,304.9 L390.6,304.0 L391.8,303.1 L393.0,302.2 L394.2,301.3 L395.5,300.5 L396.7,299.7 L397.9,298.8 L399.2,298.0 L400.4,297.2 L401.7,296.4 L403.0,295.7 L404.3,294.9 L405.6,294.2 L406.9,293.4 L408.2,292.7 L409.5,292.0 L410.8,291.3 L412.1,290.5 L413.5,289.8 L414.8,289.1 L416.1,288.5 L417.5,287.8 L418.8,287.1 L420.2,286.4 L421.5,285.8 L422.9,285.1 L424.2,284.4 L425.6,283.8 L426.9,283.1 L428.3,282.5 L429.6,281.8 L431.0,281.2 L432.4,280.5 L433.7,279.9 L435.1,279.3 L436.4,278.6 L437.8,278.0 L439.1,277.4 L440.5,276.7 L441.9,276.1 L443.2,275.5 L444.6,274.9 L446.0,274.3 L447.3,273.7 L448.7,273.1 L450.1,272.5 L451.5,271.9 L452.8,271.3 L454.2,270.7 L455.6,270.1 L457.0,269.5 L458.4,268.9 L459.7,268.3 L461.1,267.7 L462.5,267.2 L463.9,266.6 L465.3,266.0 L466.7,265.4 L468.1,264.8 L469.4,264.3 L470.8,263.7 L472.2,263.1 L473.6,262.5 L475.0,261.9 L476.4,261.4 L477.7,260.8 L479.1,260.2 L480.5,259.7 L481.9,259.1 L483.3,258.5 L484.7,258.0 L486.1,257.4 L487.5,256.8 L488.9,256.3 L490.3,255.7 L491.7,255.2 L493.0,254.6 L494.4,254.1 L495.8,253.5 L497.2,253.0 L498.6,252.4 L500.0,251.9 L501.4,251.3 L502.8,250.7 L504.2,250.2 L505.6,249.6 L507.0,249.1 L508.4,248.5 L509.8,248.0 L511.2,247.4 L512.5,246.8 L513.9,246.3 L515.3,245.7 L516.7,245.1 L518.1,244.6 L519.5,244.0 L520.9,243.5 L522.3,242.9 L523.7,242.3 L525.1,241.8 L526.4,241.2 L527.8,240.6 L529.2,240.1 L530.6,239.5 L532.0,238.9 L533.4,238.4 L534.8,237.8 L536.2,237.2 L537.6,236.7 L539.0,236.1 L540.3,235.5 L541.7,235.0 L543.1,234.4 L544.5,233.8 L545.9,233.3 L547.3,232.7 L548.7,232.1 L550.1,231.6 L551.5,231.0 L552.8,230.4 L554.2,229.9 L555.6,229.3 L557.0,228.7 L558.4,228.1 L559.8,227.6 L561.2,227.0 L562.5,226.4 L563.9,225.8 L565.3,225.3 L566.7,224.7 L568.1,224.1 L569.5,223.5 L570.9,223.0 L572.3,222.4 L573.6,221.9 L575.0,221.3 L576.4,220.8 L577.8,220.2 L579.2,219.7 L580.6,219.2 L582.0,218.6 L583.5,218.1 L584.9,217.6 L586.3,217.1 L587.7,216.6 L589.1,216.1 L590.5,215.6 L591.9,215.1 L593.4,214.6 L594.8,214.1 L596.2,213.6 L597.6,213.1 L599.0,212.6 L600.4,212.1 L601.8,211.6 L603.3,211.1 L604.7,210.6 L606.1,210.1 L607.5,209.6 L608.9,209.1 L610.3,208.6 L611.7,208.1 L613.1,207.6 L614.6,207.1 L616.0,206.6 L617.4,206.1 L618.8,205.6 L620.2,205.1 L621.7,204.7 L623.1,204.2 L624.5,203.8 L626.0,203.3 L627.4,202.9 L628.8,202.5 L630.3,202.1 L631.7,201.6 L633.2,201.2 L634.6,200.8 L636.1,200.5 L637.5,200.1 L639.0,199.7 L640.4,199.4 L641.9,199.1 L643.4,198.7 L644.8,198.4 L646.3,198.1 L647.8,197.8 L649.2,197.5 L650.7,197.3 L652.2,197.0 L653.7,196.7 L655.1,196.4 L656.6,196.2 L658.1,195.9 L659.6,195.7 L661.0,195.4 L662.5,195.2 L664.0,194.9 L665.5,194.7 L667.0,194.5 L668.5,194.2 L669.9,194.0 L671.4,193.8 L672.9,193.6 L674.4,193.4 L675.9,193.2 L677.4,193.0 L678.9,192.8 L680.4,192.7 L681.8,192.5 L683.3,192.4 L684.8,192.2 L686.3,192.1 L687.8,192.0 L689.3,191.9 L690.8,191.8 L692.3,191.7 L693.8,191.6 L695.3,191.5 L696.8,191.4 L698.3,191.3 L699.8,191.2 L701.3,191.1 L702.8,191.1 L704.3,191.0 L705.8,190.9 L707.3,190.9 L708.8,190.8 L710.0,190.8 L712.0,190.8 L714.0,190.7 L716.0,190.7 L718.0,190.6 L720.0,190.6 L722.0,190.5 L724.0,190.5 L726.0,190.4 L728.0,190.4 L730.0,190.4 L732.0,190.4 L734.0,190.4 L736.0,190.4 L738.0,190.3 L740.0,190.3 L742.0,190.3 L744.0,190.3 L746.0,190.3 L748.0,190.3 L750.0,190.3 L752.0,190.3 L754.0,190.3 L756.0,190.2 L758.0,190.2 L760.0,190.2 L762.0,190.2 L764.0,190.2 L766.0,190.2 L768.0,190.2 L770.0,190.2 L772.0,190.2 L774.0,190.2 L776.0,190.2 L778.0,190.2 L780.0,190.2 L782.0,190.2 L784.0,190.2 L786.0,190.2 L788.0,190.2 L790.0,190.2 L792.0,190.2 L794.0,190.2 L796.0,190.2 L798.0,190.2 L800.0,190.2 L802.0,190.2 L804.0,190.2 L806.0,190.3 L808.0,190.3 L810.0,190.3 L812.0,190.3 L814.0,190.3 L816.0,190.3 L818.0,190.3 L820.0,190.3 L822.0,190.3 L824.0,190.3 L826.0,190.4 L828.0,190.4 L830.0,190.4 L832.0,190.4 L834.0,190.4 L836.0,190.4 L838.0,190.4 L840.0,190.4 L842.0,190.5 L844.0,190.5 L846.0,190.5 L848.0,190.5 L850.0,190.5 L852.0,190.5 L854.0,190.5 L856.0,190.6 L858.0,190.6 L860.0,190.6 L862.0,190.6 L864.0,190.6 L866.0,190.6 L868.0,190.6 L870.0,190.7 L872.0,190.7 L874.0,190.7 L876.0,190.7 L878.0,190.7 L880.0,190.8 L882.0,190.8 L884.0,190.8 L886.0,190.8 L888.0,190.8 L890.0,190.9 L892.0,190.9 L894.0,190.9 L896.0,190.9 L898.0,191.0 L900.0,191.0 L902.0,191.0 L904.0,191.0 L906.0,191.1 L908.0,191.1 L910.0,191.1 L912.0,191.1 L914.0,191.1 L916.0,191.2 L918.0,191.2 L920.0,191.2 L922.0,191.3 L924.0,191.3 L926.0,191.3 L928.0,191.3 L930.0,191.4 L932.0,191.4 L934.0,191.4 L936.0,191.4 L938.0,191.5 L940.0,191.5 L942.0,191.5 L944.0,191.6 L946.0,191.6 L948.0,191.6 L950.0,191.7 L952.0,191.7 L954.0,191.7 L956.0,191.7 L958.0,191.8 L960.0,191.8 L962.0,191.9 L964.0,191.9 L966.0,191.9 L968.0,192.0 L970.0,192.0 L972.0,192.1 L974.0,192.1 L976.0,192.1 L978.0,192.2 L980.0,192.2 L982.0,192.3 L984.0,192.3 L986.0,192.3 L988.0,192.4 L990.0,192.4 L992.0,192.4 L994.0,192.5 L996.0,192.5 L998.0,192.5 L1000.0,192.6 L1002.0,192.6 L1004.0,192.6 L1006.0,192.7 L1008.0,192.7 L1010.0,192.8 L1012.0,192.9 L1014.0,193.1 L1016.0,193.3 L1018.0,193.5 L1020.0,193.7 L1022.0,194.0 L1024.0,194.2 L1026.0,194.5 L1028.0,194.9 L1030.0,195.2 L1032.0,195.6 L1034.0,196.0 L1036.0,196.4 L1038.0,196.9 L1040.0,197.3 L1042.0,197.8 L1044.0,198.3 L1046.0,198.9 L1048.0,199.4 L1050.0,200.0 L1052.0,200.6 L1054.0,201.2 L1056.0,201.8 L1058.0,202.4 L1060.0,203.1 L1062.0,203.8 L1064.0,204.5 L1066.0,205.2 L1068.0,205.9 L1070.0,206.6 L1072.0,207.4 L1074.0,208.2 L1076.0,209.0 L1078.0,209.8 L1080.0,210.6 L1082.0,211.4 L1084.0,212.3 L1086.0,213.1 L1088.0,214.0 L1090.0,214.9 L1092.0,215.8 L1094.0,216.7 L1096.0,217.6 L1098.0,218.5 L1100.0,219.5 L1102.0,220.4 L1104.0,221.4 L1106.0,222.3 L1108.0,223.3 L1110.0,224.3 L1112.0,225.3 L1114.0,226.3 L1116.0,227.3 L1118.0,228.3 L1120.0,229.3 L1122.0,230.3 L1124.0,231.4 L1126.0,232.4 L1128.0,233.4 L1130.0,234.5 L1132.0,235.5 L1134.0,236.6 L1136.0,237.6 L1138.0,238.7 L1140.0,239.7 L1142.0,240.8 L1144.0,241.9 L1146.0,242.9 L1148.0,244.0 L1150.0,245.1 L1152.0,246.1 L1154.0,247.2 L1156.0,248.3 L1158.0,249.3 L1160.0,250.4 L1162.0,251.4 L1164.0,252.5 L1166.0,253.6 L1168.0,254.6 L1170.0,255.7 L1172.0,256.8 L1174.0,257.8 L1176.0,258.9 L1178.0,260.0 L1180.0,261.1 L1182.0,262.2 L1184.0,263.3 L1186.0,264.4 L1188.0,265.5 L1190.0,266.7 L1192.0,267.8 L1194.0,269.0 L1196.0,270.2 L1198.0,271.4 L1200.0,272.6 L1202.0,273.8 L1204.0,275.1 L1206.0,276.3 L1208.0,277.6 L1210.0,278.9 L1212.0,280.3 L1214.0,281.6 L1216.0,283.0 L1218.0,284.4 L1220.0,285.9 L1222.0,287.3 L1224.0,288.8 L1226.0,290.4 L1228.0,291.9 L1230.0,293.5 L1232.0,295.1 L1234.0,296.8 L1236.0,298.5 L1238.0,300.2 L1240.0,302.0 L1242.0,303.8 L1244.0,305.7 L1246.0,307.6 L1248.0,309.5 L1250.0,311.5 L1252.0,313.5 L1254.0,315.6 L1256.0,317.8 L1258.0,320.0 L1260.0,322.3 L1262.0,324.6 L1264.0,327.0 L1266.0,329.4 L1268.0,331.9 L1270.0,334.5 L1272.0,337.1 L1274.0,339.8 L1276.0,342.6 L1278.0,345.4 L1280.0,348.3 L1282.0,351.3 L1284.0,354.3 L1286.0,357.5 L1288.0,360.7 L1290.0,364.0" fill="none" stroke="#f00" stroke-width="1.25" stroke-linejoin="round"/>
</svg>
<div class="a" style="left:0;top:860px;width:1440px;height:40px;background:linear-gradient(to bottom,#2a2c34 0px,#2a2c34 1px,#c4c8d4 1px,#c4c8d4 2px,#8a92a8 2px,#6a7290 4px,#3e4868 7px,#1c2a58 10px,#1e3270 13px,#1f3c84 20px,#2a4c98 40px)"></div>
<div class="a" style="left:500px;top:866px;width:700px;height:34px;background:radial-gradient(ellipse at 40% 80%,rgba(80,120,200,0.28),rgba(0,0,0,0) 65%)"></div>
<svg class="a" style="left:7px;top:861px" width="40" height="39" viewBox="0 0 40 39"><defs><radialGradient id="orb" cx="50%" cy="75%" r="60%"><stop offset="0" stop-color="#3fd4f4"/><stop offset="0.45" stop-color="#1b6fb0"/><stop offset="1" stop-color="#0c2e5a"/></radialGradient><linearGradient id="orbh" x1="0" y1="0" x2="0" y2="1"><stop offset="0" stop-color="#fff" stop-opacity="0.7"/><stop offset="1" stop-color="#fff" stop-opacity="0.05"/></linearGradient></defs><circle cx="20" cy="19" r="18.5" fill="url(#orb)" stroke="#8aa4c4" stroke-width="1"/><ellipse cx="20" cy="12" rx="15" ry="9" fill="url(#orbh)"/><path d="M10 9C13 7 16 8 18 9L17 17C15 16 12 15 9 17Z" fill="#f05a28"/><path d="M20 10C23 11 26 11 29 9L28 18C25 19 22 19 19 18Z" fill="#7cbc2a"/><path d="M9 19C12 17 15 18 17 19L16 27C14 26 11 25 8 27Z" fill="#28a8e8"/><path d="M19 20C22 21 25 21 28 19L27 28C24 29 21 29 18 28Z" fill="#fcc010"/></svg>
<div class="a" style="left:60px;top:861px;width:51px;height:38px;border:1px solid #10131c;border-radius:3px;background:linear-gradient(to bottom,#a9b1c6 0%,#6d7aa0 25%,#3e5590 50%,#33519e 100%);box-shadow:inset 0 0 0 1px rgba(255,255,255,0.45)"></div>
<div class="a" style="left:112px;top:862px;width:2px;height:37px;background:rgba(180,195,220,0.5)"></div>
<div class="a" style="left:116px;top:862px;width:2px;height:37px;background:rgba(180,195,220,0.4)"></div>
<svg class="a" style="left:66px;top:864px" width="38" height="34" viewBox="0 0 38 34"><defs><linearGradient id="ieg" x1="0" y1="0" x2="0" y2="1"><stop offset="0" stop-color="#6fd0ff"/><stop offset="0.5" stop-color="#1a86dc"/><stop offset="1" stop-color="#0a4a9e"/></linearGradient></defs><path d="M5 30C2 26 7 17 15 11C24 4 34 0 35 3C35.5 5 34 7 33 8" fill="none" stroke="#e8a818" stroke-width="2.6" stroke-linecap="round"/><path d="M30.8 17.7A9.8 9.8 0 1 0 28.5 23.8" fill="none" stroke="url(#ieg)" stroke-width="4.6"/><rect x="12" y="16.3" width="21" height="3" fill="#1a72c8"/><path d="M14.5 13.5A7 7 0 0 1 27.5 13.5" fill="none" stroke="#a8e8ff" stroke-width="1.2" opacity="0.8"/><path d="M5 30C3.5 27 6 22 10 17" fill="none" stroke="#f4c030" stroke-width="2.6" stroke-linecap="round"/></svg>
<svg class="a" style="left:134px;top:866px" width="34" height="31" viewBox="0 0 34 31"><path d="M1 6H12L14 4H31V27H1Z" fill="#e8c868"/><rect x="3" y="2" width="8" height="3" fill="#fff"/><rect x="3" y="2" width="2" height="2" fill="#20c020"/><rect x="12" y="4" width="9" height="3" fill="#fff"/><rect x="12" y="4" width="2" height="2" fill="#d02020"/><rect x="20" y="6" width="9" height="3" fill="#fff"/><rect x="20" y="6" width="2" height="2" fill="#2080e0"/><path d="M1 9H32V26H1Z" fill="#f6e0a0"/><path d="M4 17H27V29H22V23H10V29H4Z" fill="#8cc8ec" stroke="#4a90c0" stroke-width="0.8"/></svg>
<svg class="a" style="left:198px;top:868px" width="28" height="27" viewBox="0 0 28 27"><rect x="5" y="2" width="21" height="23" fill="#a8d4f0"/><rect x="1" y="1" width="21" height="24" fill="#78b4dc"/><circle cx="11.5" cy="13" r="8.5" fill="#f07818"/><path d="M8.5 8V18L17 13Z" fill="#fff"/></svg>
<div class="a" style="left:246px;top:861px;width:53px;height:38px;border:1px solid #10131c;border-radius:3px;background:linear-gradient(to bottom,#a9b1c6 0%,#6d7aa0 25%,#3e5590 50%,#33519e 100%);box-shadow:inset 0 0 0 1px rgba(255,255,255,0.45)"></div>
<div class="a" style="left:308px;top:861px;width:58px;height:38px;border:1px solid #10131c;border-radius:3px;background:linear-gradient(165deg,#eceef3 0%,#c3c9d9 30%,#97a3c4 55%,#8495c2 100%);box-shadow:inset 0 0 0 1px rgba(255,255,255,0.85)"></div>
<div class="a" style="left:370px;top:861px;width:58px;height:38px;border:1px solid #10131c;border-radius:3px;background:linear-gradient(to bottom,#a9b1c6 0%,#6d7aa0 25%,#3e5590 50%,#33519e 100%);box-shadow:inset 0 0 0 1px rgba(255,255,255,0.45)"></div>
<div class="a" style="left:432px;top:861px;width:58px;height:38px;border:1px solid #10131c;border-radius:3px;background:linear-gradient(to bottom,#a9b1c6 0%,#6d7aa0 25%,#3e5590 50%,#33519e 100%);box-shadow:inset 0 0 0 1px rgba(255,255,255,0.45)"></div>
<div class="a" style="left:302px;top:862px;width:3px;height:37px;background:linear-gradient(to right,rgba(180,195,220,0.45),rgba(20,30,60,0.6))"></div>
<svg class="a" style="left:255px;top:864px" width="34" height="31" viewBox="0 0 34 31"><path d="M1.5 2.5H4V13H6.5M7.5 8V2.5H12.5V8M15 8V2.5H19V6L22 9.5L26 2.5L29.5 13.5L33 2" stroke="#0a5a0a" stroke-width="3.6" fill="none" stroke-linejoin="miter"/><path d="M1.5 2.5H4V13H6.5M7.5 8V2.5H12.5V8M15 8V2.5H19V6L22 9.5L26 2.5L29.5 13.5L33 2" stroke="#00ff00" stroke-width="2.2" fill="none" stroke-linejoin="miter"/><rect x="6" y="8" width="24" height="22" fill="#8c8c8c"/><rect x="8" y="10" width="20" height="18" fill="#000"/><rect x="9" y="11" width="18" height="16" fill="#fff"/><rect x="11" y="14" width="5" height="2" fill="#000080"/><rect x="14" y="19" width="2" height="6" fill="#000080"/><rect x="19" y="13" width="7" height="5" fill="#000"/><rect x="19" y="13" width="7" height="1.5" fill="#0000ff"/><path d="M19.5 16H21.5L22.5 15L23.5 16H25.5" stroke="#f00" stroke-width="1" fill="none"/><rect x="19" y="20" width="7" height="5" fill="#000"/><rect x="19" y="20" width="7" height="1.5" fill="#0000ff"/><path d="M21 24L23.5 22" stroke="#f00" stroke-width="1.2"/></svg>
<svg class="a" style="left:381px;top:864px" width="34" height="31" viewBox="0 0 34 31"><path d="M1.5 2.5H4V13H6.5M7.5 8V2.5H12.5V8M15 8V2.5H19V6L22 9.5L26 2.5L29.5 13.5L33 2" stroke="#0a5a0a" stroke-width="3.6" fill="none" stroke-linejoin="miter"/><path d="M1.5 2.5H4V13H6.5M7.5 8V2.5H12.5V8M15 8V2.5H19V6L22 9.5L26 2.5L29.5 13.5L33 2" stroke="#00ff00" stroke-width="2.2" fill="none" stroke-linejoin="miter"/><rect x="6" y="8" width="24" height="22" fill="#8c8c8c"/><rect x="8" y="10" width="20" height="18" fill="#000"/><rect x="9" y="11" width="18" height="16" fill="#fff"/><rect x="11" y="14" width="5" height="2" fill="#000080"/><rect x="14" y="19" width="2" height="6" fill="#000080"/><rect x="19" y="13" width="7" height="5" fill="#000"/><rect x="19" y="13" width="7" height="1.5" fill="#0000ff"/><path d="M19.5 16H21.5L22.5 15L23.5 16H25.5" stroke="#f00" stroke-width="1" fill="none"/><rect x="19" y="20" width="7" height="5" fill="#000"/><rect x="19" y="20" width="7" height="1.5" fill="#0000ff"/><path d="M21 24L23.5 22" stroke="#f00" stroke-width="1.2"/></svg>
<svg class="a" style="left:443px;top:864px" width="34" height="31" viewBox="0 0 34 31"><path d="M1.5 2.5H4V13H6.5M7.5 8V2.5H12.5V8M15 8V2.5H19V6L22 9.5L26 2.5L29.5 13.5L33 2" stroke="#0a5a0a" stroke-width="3.6" fill="none" stroke-linejoin="miter"/><path d="M1.5 2.5H4V13H6.5M7.5 8V2.5H12.5V8M15 8V2.5H19V6L22 9.5L26 2.5L29.5 13.5L33 2" stroke="#00ff00" stroke-width="2.2" fill="none" stroke-linejoin="miter"/><rect x="6" y="8" width="24" height="22" fill="#8c8c8c"/><rect x="8" y="10" width="20" height="18" fill="#000"/><rect x="9" y="11" width="18" height="16" fill="#fff"/><rect x="11" y="14" width="5" height="2" fill="#000080"/><rect x="14" y="19" width="2" height="6" fill="#000080"/><rect x="19" y="13" width="7" height="5" fill="#000"/><rect x="19" y="13" width="7" height="1.5" fill="#0000ff"/><path d="M19.5 16H21.5L22.5 15L23.5 16H25.5" stroke="#f00" stroke-width="1" fill="none"/><rect x="19" y="20" width="7" height="5" fill="#000"/><rect x="19" y="20" width="7" height="1.5" fill="#0000ff"/><path d="M21 24L23.5 22" stroke="#f00" stroke-width="1.2"/><rect x="1" y="9" width="7" height="20" fill="#aaa"/><circle cx="4.5" cy="12.5" r="2.6" fill="#20e020" stroke="#000" stroke-width="0.6"/><circle cx="4.5" cy="18.5" r="2.6" fill="#f0f020" stroke="#000" stroke-width="0.6"/><circle cx="4.5" cy="24.5" r="2.6" fill="#e02020" stroke="#000" stroke-width="0.6"/></svg>
<svg class="a" style="left:323px;top:866px" width="28" height="28" viewBox="0 0 28 28"><rect x="2" y="2" width="26" height="26" fill="#808080"/><rect x="0.5" y="0.5" width="25" height="25" fill="#00ffff" stroke="#000"/><path d="M5.5 1V25M10.5 1V25M15.5 1V25M20.5 1V25M1 5.5H25M1 10.5H25M1 15.5H25M1 20.5H25" stroke="#808080" stroke-width="1"/><path d="M1 15C3 15 4 13 5 13C6 13 7 15 8 15C9 15 9.5 13 11 13C12 13 13 15 14 15C15 15 15 10 15.5 10C16 10 16 15 17 15C18 15 18.5 13 19.5 13C20.5 13 21 15 22 15C23 15 24 14 25 14.5" stroke="#800000" fill="none" stroke-width="1.2"/></svg>
<svg class="a" style="left:1262px;top:878px" width="9" height="6" viewBox="0 0 9 6"><path d="M0.5 5.5L4.5 1L8.5 5.5Z" fill="#fff"/></svg>
<svg class="a" style="left:1283px;top:873px" width="16" height="16" viewBox="0 0 16 16"><path d="M1.5 0V16" stroke="#fff" stroke-width="1.6"/><path d="M2 1.5H8L9 3H15L13 6L15 9H9L8 8H2Z" fill="#fff"/></svg>
<svg class="a" style="left:1307px;top:873px" width="17" height="16" viewBox="0 0 17 16"><rect x="4.5" y="3.5" width="11" height="9" fill="#223a66" stroke="#fff" stroke-width="1.3"/><path d="M7 15H13M10 12.5V15" stroke="#fff" stroke-width="1.3"/><path d="M1 1V7H5V1M2 1V3M4 1V3M3 7V16" stroke="#fff" stroke-width="1.2" fill="none"/></svg>
<svg class="a" style="left:1331px;top:873px" width="16" height="16" viewBox="0 0 16 16"><path d="M1 5H4L8 1V15L4 11H1Z" fill="#fff"/><path d="M10 5.5C11 6.5 11 9.5 10 10.5M12 3.5C14 5.5 14 10.5 12 12.5M14 2C16.5 4.5 16.5 11.5 14 14" stroke="#fff" stroke-width="1.2" fill="none"/></svg>
<div class="a" style="left:1352px;top:866px;width:72px;text-align:center;font-size:12px;line-height:14px;color:#fff;white-space:nowrap">9:55 AM</div>
<div class="a" style="left:1352px;top:883px;width:74px;text-align:center;font-size:12px;line-height:14px;color:#fff;white-space:nowrap">21/10/2011</div>
<div class="a" style="left:1426px;top:861px;width:14px;height:39px;border:1px solid rgba(160,175,200,0.6);background:linear-gradient(160deg,rgba(255,255,255,0.3),rgba(255,255,255,0.05) 50%,rgba(0,0,0,0.1))"></div>
</body></html>
